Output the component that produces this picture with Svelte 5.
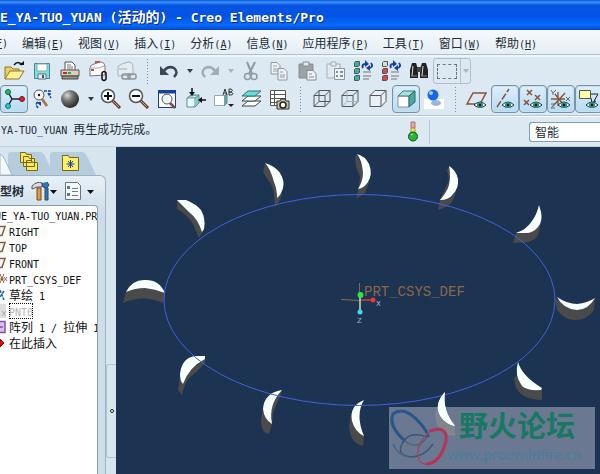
<script>
  const menus = [
    ['编辑', 'E'], ['视图', 'V'], ['插入', 'I'], ['分析', 'A'], ['信息', 'N'],
    ['应用程序', 'P'], ['工具', 'T'], ['窗口', 'W'], ['帮助', 'H']
  ];

  const fileTools = [
    { id: 'open', label: '打开' }, { id: 'save', label: '保存' }, { id: 'print', label: '打印' },
    { id: 'mail', label: '发送附件' }, { id: 'link', label: '发送链接' }, { id: 'sep' },
    { id: 'undo', label: '撤消' }, { id: 'drop', label: '撤消列表' },
    { id: 'redo', label: '重做' }, { id: 'dropoff', label: '重做列表' },
    { id: 'cut', label: '剪切' }, { id: 'copy', label: '复制' }, { id: 'paste', label: '粘贴' },
    { id: 'special', label: '选择性粘贴' }, { id: 'regen', label: '再生' },
    { id: 'regenall', label: '再生管理器' }, { id: 'find', label: '查找' }
  ];

  const viewTools = [
    { id: 'spin', label: '旋转中心', on: true }, { id: 'orient', label: '定向模式' },
    { id: 'sphere', label: '外观库' }, { id: 'drop', label: '外观列表' },
    { id: 'zoomin', label: '放大' }, { id: 'zoomout', label: '缩小' }, { id: 'refit', label: '重新调整' },
    { id: 'reorient', label: '重定向' }, { id: 'views', label: '已保存视图' }, { id: 'layers', label: '层' },
    { id: 'manager', label: '视图管理器' }, { id: 'sep' },
    { id: 'wire', label: '线框' }, { id: 'hidden', label: '隐藏线' }, { id: 'nohidden', label: '消隐' },
    { id: 'shaded', label: '着色', on: true }, { id: 'realism', label: '增强的真实感' }, { id: 'sep' },
    { id: 'plane', label: '平面显示' }, { id: 'axis', label: '轴显示', on: true },
    { id: 'points', label: '点显示', on: true }, { id: 'csys', label: '坐标系显示', on: true },
    { id: 'notes', label: '注释显示', on: true }
  ];

  const tree = [
    { text: 'UE_YA-TUO_YUAN.PRT', icon: '' }, { text: 'RIGHT', icon: 'plane' },
    { text: 'TOP', icon: 'plane' }, { text: 'FRONT', icon: 'plane' },
    { text: 'PRT_CSYS_DEF', icon: 'csys' }, { text: '草绘 1', icon: 'sketch' },
    { text: 'PNT0', icon: 'point', off: true }, { text: '阵列 1 / 拉伸 1', icon: 'pattern' },
    { text: '在此插入', icon: 'insert' }
  ];

  // Each blade: the shaded side first, then the lit face.
  const blades = [
    ['M265 164L263 172L268 180Q274 187 274 195L275 207L280 200L282 194L276 180Z', 'M265 163Q275 166 280 173Q285 181 283 188Q281 195 277 198Q277 189 274 182Q271 170 265 163Z'],
    ['M357 155L355 157L356 167L360 177L359 187L356 199L365 193L369 183L364 170Z', 'M357 154Q365 156 369 164Q373 174 368 182Q364 188 358 189Q363 181 363 173Q362 160 357 154Z'],
    ['M449 167L447 170L449 180L440 200L438 210L448 206Q455 200 456 190Z', 'M449 166Q456 170 458 179Q459 188 453 194Q449 200 440 200Q447 192 449 185Q451 176 449 166Z'],
    ['M516 233L513 243L528 242Q537 240 539 232L541 222Z', 'M539 205L541 212Q543 221 538 227Q533 233 526 233L516 233Q526 230 532 221Q537 214 539 205Z'],
    ['M555 299L557 310Q565 320 575 320Q587 320 594 310L595 298L577 305Z', 'M557 297Q567 304 577 304Q588 303 595 298Q588 310 577 310Q563 309 557 297Z'],
    ['M516 376L514 378L516 388Q523 400 542 400L542 388Z', 'M518 362Q522 376 542 388L541 390Q527 391 522 386Q514 375 518 362Z'],
    ['M437 408L435 414Q437 436 455 436L455 426Z', 'M445 392Q442 410 455 426Q446 424 441 417Q433 405 445 392Z'],
    ['M351 413L349 427Q351 444 363 446L364 436Z', 'M364 400Q355 415 364 436Q355 432 352 421Q349 406 364 400Z'],
    ['M282 390L281 394L273 413L272 424L269 434Q261 433 261 420L263 408Z', 'M282 390Q268 405 272 424Q264 419 263 409Q264 393 282 390Z'],
    ['M205 356L205 363Q197 372 189 378Q184 385 182 395L178 390L180 376Z', 'M205 356L205 359Q189 367 183 384Q180 381 180 374Q182 357 196 356Z'],
    ['M126 292L123 303Q142 294 163 303L165 293L145 283Z', 'M126 292Q132 280 144 280Q159 279 165 293Q155 289 145 288Q135 288 126 292Z'],
    ['M177 200L177 209Q187 214 193 224L199 238L204 230L198 216Z', 'M177 200L186 200Q196 204 201 210Q206 219 204 229L202 232Q198 219 189 212Z']
  ];

  // Splits mixed text so that CJK and Latin runs can have their own size.
  const runs = (s) => s.match(/[\u2e80-\uffff]+|[^\u2e80-\uffff]+/g) ?? [];
</script>

{#snippet mixed(s)}{#each runs(s) as r}<span class={r.charCodeAt(0) > 11000 ? 'cjk' : 'latin'}>{r}</span>{/each}{/snippet}

{#snippet eye()}
  <path d="M10 19q6-6 12 0q-6 5-12 0z" fill="#fff" stroke="#234" />
  <circle cx="16" cy="19" r="3" fill="#27907c" /><circle cx="16" cy="19" r="1.2" fill="#012" />
{/snippet}

{#snippet cube(a, b)}
  <path d="M5 9.5h11v11H5zM5 9.5l5-5h11v11l-5 5M16 9.5l5-5" fill={a} stroke="#555" />
  {#if b}<path d="M10 4.5v11h11M10 15.5l-5 5" fill="none" stroke={b} />{/if}
{/snippet}

{#snippet lens(sign)}
  <path d="M14 14l8 8" stroke="#5a3828" stroke-width="3" /><path d="M15 15l6 6" stroke="#d6a87a" />
  <circle cx="10" cy="10" r="6.5" fill="#f8fcff" stroke="#555" stroke-width="1.5" />
  {#if sign}<path d={sign} stroke="#111" stroke-width="2" fill="none" />{/if}
{/snippet}

{#snippet icon(id)}
  <svg viewBox="0 0 26 26" width="26" height="26" fill="none" aria-hidden="true">
    {#if id === 'open'}
      <path d="M4 21V9h6l2 2h6v3" fill="#e9ce62" stroke="#8a7722" /><path d="M4 21l5-8h14l-5 8z" fill="#fff09a" stroke="#8a7722" />
      <path d="M13 7q4-5 8 0" stroke="#111" stroke-width="1.5" /><path d="M18 7h5V3z" fill="#111" />
    {:else if id === 'save'}
      <path d="M5.500 5.500h15v15h-15z" fill="#7fdede" stroke="#4a8590" /><path d="M8 6h10v7H8z" fill="#fff" stroke="#8aa" /><path d="M9 16h8v5H9z" fill="#eef" stroke="#578" /><path d="M14 17v3" stroke="#456" stroke-width="2" />
    {:else if id === 'print'}
      <path d="M8 13V4h7l3 3v6z" fill="#fff" stroke="#555" /><path d="M10 7h4M10 9h6M10 11h6" stroke="#777" />
      <path d="M4 12h18v6H4z" fill="#d8d2b8" stroke="#555" /><path d="M5 18h16v3H5z" fill="#9a9684" stroke="#444" /><path d="M6 15h4" stroke="#c22" stroke-width="2" /><path d="M11 15h3" stroke="#2a4" stroke-width="2" />
    {:else if id === 'mail'}
      <path d="M5 18v-8q0-3 4-4l6-2q5 0 5 5v8z" fill="#fafafa" stroke="#777" /><path d="M5 10h9l5-2" stroke="#aaa" /><path d="M6 12h3M10 4h5" stroke="#b55" stroke-width="2" /><path d="M17 21v-6q2-3 4 0v6q-2 3-4 0v-4" stroke="#111" stroke-width="1.500" />
    {:else if id === 'link'}
      <path d="M5 18v-8q0-3 4-4l6-2q5 0 5 5v8z" fill="#e5ecf0" stroke="#aab2b8" /><path d="M6 11h8" stroke="#aab" /><rect x="9" y="16" width="8" height="5" rx="2" stroke="#8a9298" stroke-width="1.500" /><rect x="15" y="16" width="8" height="5" rx="2" stroke="#8a9298" stroke-width="1.500" />
    {:else if id === 'undo'}
      <path d="M7 14q5-7 11-4q5 4 0 9" stroke="#3c4654" stroke-width="2.500" /><path d="M4 8v9h9z" fill="#3c4654" />
    {:else if id === 'redo'}
      <path d="M19 14q-5-7-11-4q-5 4 0 9" stroke="#a3adb5" stroke-width="2.500" /><path d="M22 8v9h-9z" fill="#a3adb5" />
    {:else if id === 'cut'}
      <path d="M9 4l5 12M17 4l-6 12" stroke="#909aa2" stroke-width="2" /><circle cx="9.500" cy="18.500" r="3" stroke="#909aa2" stroke-width="1.500" /><circle cx="16" cy="18.500" r="3" stroke="#909aa2" stroke-width="1.500" />
    {:else if id === 'copy'}
      <path d="M5 4.500h6l3 3V16H5z" fill="#eef2f5" stroke="#8e979e" /><path d="M7 8h4M7 11h5M7 13h5" stroke="#9ba3aa" /><path d="M12 10.500h6l3 3V22h-9z" fill="#eef2f5" stroke="#8e979e" /><path d="M14 14h3M14 17h5M14 19h5" stroke="#8e979e" />
    {:else if id === 'paste'}
      <path d="M5 6h14v14H5z" fill="#9ca2a6" stroke="#858c92" /><path d="M9 4h6v4H9z" fill="#e4e8ea" stroke="#858c92" /><path d="M13 12.500h6l3 3V22h-9z" fill="#eef2f5" stroke="#858c92" /><path d="M15 16h3M15 19h5" stroke="#858c92" />
    {:else if id === 'special'}
      <path d="M5 6h13v14H5z" fill="#e4eaee" stroke="#a5adb3" /><path d="M9 4h5v4H9z" fill="#e4e8ea" stroke="#a5adb3" /><path d="M12.500 10.500h10v11h-10z" fill="#eef2f5" stroke="#8e979e" /><path d="M14 14h2M18 14h3M14 18h2M18 18h3" stroke="#858c92" stroke-width="2" />
    {:else if id === 'regen' || id === 'regenall'}
      {#each [3, 10, 17] as y, i}
        <path d="M4.500 {y + 1.5}l1-1h4v4l-1 1h-4z" fill={id === 'regen' ? '#35b4a4' : i ? '#dc4450' : '#d8dde0'} stroke="#555" />
      {/each}
      <path d="M13 10q-2-4 3-4" stroke="#1740a8" stroke-width="2" /><path d="M15 2v7l4-3z" fill="#1740a8" /><path d="M21 5q3 4-2 5" stroke="#1740a8" stroke-width="2" /><path d="M20 7v6l-4-3z" fill="#1740a8" />
      <path d="M13 14h8M13 18h8M13 21h6" stroke="#777" />
    {:else if id === 'find'}
      <path d="M6 5h4l2 6v9H4v-8zM16 5h4l2 7v8h-8v-9z" fill="#222" /><path d="M11 9h4v5h-4z" fill="#444" /><path d="M7 8l-1 10M17 8l-1 10" stroke="#ddd" /><path d="M5 18h6M15 18h6" stroke="#888" />
    {:else if id === 'spin'}
      <path d="M7 6l4 7l10 0M11 13l-4 7" stroke="#223" stroke-width="1.500" /><circle cx="7" cy="6" r="2.500" fill="#2abf3b" stroke="#165" /><circle cx="21" cy="13" r="2.500" fill="#d8202c" stroke="#811" /><circle cx="7" cy="20" r="2.500" fill="#27c8cf" stroke="#177" />
    {:else if id === 'orient'}
      <path d="M13 13l5 7" stroke="#b0784a" stroke-width="3" /><circle cx="10" cy="9" r="5" fill="#f4f8fa" stroke="#555" /><circle cx="10" cy="9" r="1.200" fill="#111" /><path d="M15 5h6v4M19 7l3 5M9 22q-4-5 1-6" stroke="#1740a8" stroke-width="1.500" stroke-dasharray="3 1" /><path d="M7 16h5v4z" fill="#1740a8" />
    {:else if id === 'sphere'}
      <circle cx="13" cy="13" r="9" fill="url(#ball)" />
    {:else if id === 'zoomin'}{@render lens('M10 6v8M6 10h8')}
    {:else if id === 'zoomout'}{@render lens('M6 10h8')}
    {:else if id === 'refit'}
      <rect x="4.500" y="4.500" width="17" height="17" fill="#fff" stroke="#173f94" /><path d="M4 6h18" stroke="#173f94" stroke-width="3" /><path d="M16 17l5 5" stroke="#805038" stroke-width="2.500" /><circle cx="13" cy="13" r="5" fill="#eef7fa" stroke="#555" />
    {:else if id === 'reorient'}
      <path d="M5 12h8v9H5z" fill="#eefcfc" stroke="#5b8c90" /><path d="M13 12l4-3v8l-4 4M5 12l4-3h8" fill="#7fcfc9" stroke="#5b8c90" /><path d="M10 2v6M24 14h-5" stroke="#111" stroke-width="1.500" /><path d="M7 6h6l-3 4zM20 11v6l-4-3z" fill="#111" />
    {:else if id === 'views'}
      <path d="M4.500 9.500h10v10h-10z" fill="#fff" stroke="#9aa" /><path d="M14 10l3-2v9l-3 3" fill="#62aaa5" stroke="#688" /><path d="M13 9l2-6l2 6M14 7h3M19 9V3h2q3 1 0 3h-2h2q4 2 0 3z" stroke="#333" /><path d="M18 18h6l-3 3z" fill="#222" />
    {:else if id === 'layers'}
      <path d="M4 20l6-5h13l-6 5z" fill="#fff" stroke="#444" /><path d="M4 15l6-5h13l-6 5z" fill="#f4ffff" stroke="#444" /><path d="M4 10l6-5h13l-6 5z" fill="#62dede" stroke="#386e70" />
    {:else if id === 'manager'}
      <path d="M4.500 4.500h15v15h-15zM4 8.500h16M4 12.500h16M4 16.500h16M8.500 4v16" fill="#fff" stroke="#555" /><path d="M11 15h3l1-2h4l1 2h3v8H11z" fill="#c9c2a4" stroke="#333" /><circle cx="17" cy="19" r="3" fill="#fff" stroke="#222" stroke-width="1.500" />
    {:else if id === 'wire'}{@render cube('none', '#555')}
    {:else if id === 'hidden'}{@render cube('none', '#a6b0b8')}
    {:else if id === 'nohidden'}{@render cube('#e9f1f6', '')}
    {:else if id === 'shaded'}
      <path d="M5 10h11v11H5z" fill="#fff" stroke="#899" /><path d="M5 10l5-5h12l-6 5z" fill="#a4e4df" stroke="#477" /><path d="M16 10l6-5v11l-6 5z" fill="#4ba9a4" stroke="#366" />
    {:else if id === 'realism'}
      <path d="M3 13h20v10H3z" fill="#fff" /><ellipse cx="15" cy="17" rx="5" ry="3" fill="#9bb8dc" /><circle cx="12" cy="9" r="5.500" fill="#1767e8" /><circle cx="10" cy="7" r="2" fill="#9ccbff" />
    {:else if id === 'plane'}
      <path d="M3 18L9 7h13l-6 11z" stroke="#8a5137" stroke-width="1.500" />{@render eye()}
    {:else if id === 'axis'}
      <path d="M5 21L17 3" stroke="#8a5137" stroke-width="1.500" stroke-dasharray="7 2" />{@render eye()}
    {:else if id === 'points'}
      <path d="M7 4l5 5M12 4L7 9M15 9l5 5M20 9l-5 5M4 14l5 5M9 14l-5 5" stroke="#8a5137" stroke-width="1.500" />{@render eye()}
    {:else if id === 'csys'}
      <path d="M10 6v14M5 20L17 7M3 13h14M7 8l8 10" stroke="#8a5137" stroke-width="1.300" /><path d="M3 4l2 3l3-3M5 7v2M18 11l4 4M22 11l-4 4M3 18h4l-4 4h4" stroke="#667" />{@render eye()}
    {:else if id === 'notes'}
      <path d="M3.500 4.500h11v8h-11z" fill="#ffffa8" stroke="#555" /><path d="M15 8h7l-5 9M15 12l1 5l4-2" stroke="#222" />{@render eye()}
    {/if}
  </svg>
{/snippet}

{#snippet tool(t)}
  {#if t.id === 'sep'}
    <span class="grip"></span>
  {:else if t.id === 'drop' || t.id === 'dropoff'}
    <button class="drop" class:off={t.id === 'dropoff'} aria-label={t.label}><i></i></button>
  {:else}
    <button class="tool" class:on={t.on} aria-label={t.label}>{@render icon(t.id)}</button>
  {/if}
{/snippet}

<svg class="defs" width="0" height="0" aria-hidden="true">
  <radialGradient id="ball" cx=".35" cy=".3" r=".75">
    <stop offset="0" stop-color="#d8d8d8" /><stop offset=".4" stop-color="#777" /><stop offset="1" stop-color="#222" />
  </radialGradient>
</svg>

<div class="app">
  <header class="title">{@render mixed('E_YA-TUO_YUAN (')}<span class="cjk">活动的</span><span class="latin">) - Creo Elements/Pro</span></header>

  <nav class="menu">
    <button class="first"><span class="latin">(<u>F</u>)</span></button>
    {#each menus as [name, key]}
      <button><span class="cjk">{name}</span><span class="latin">(<u>{key}</u>)</span></button>
    {/each}
  </nav>

  <div class="tools">
    <div class="row">
      {#each fileTools as t}{@render tool(t)}{/each}
      <button class="pick" aria-label="选取框"><span class="marquee"></span><span class="caret"><i></i></span></button>
    </div>
    <div class="row">
      {#each viewTools as t}{@render tool(t)}{/each}
    </div>
  </div>

  <div class="status">
    <p>{@render mixed('YA-TUO_YUAN 再生成功完成。')}</p>
    <div class="lamp">
      <svg viewBox="0 0 12 22" width="12" height="22" aria-hidden="true">
        <path d="M4 1h4v6H4z" fill="#e9a0a0" stroke="#a77" /><path d="M4 7h4v5H4z" fill="#f4e55a" stroke="#a95" /><circle cx="6" cy="15.500" r="4.500" fill="#27b637" stroke="#124d18" /><path d="M4 14l2-1" stroke="#b8ffb8" />
      </svg>
    </div>
    <select aria-label="过滤器"><option>智能</option></select>
  </div>

  <main>
    <aside>
      <div class="tabs">
        <svg viewBox="0 0 106 26" width="106" height="26" aria-hidden="true">
          <path d="M8 26V6q0-3 4-3h28q3 0 5 4l9 19z" fill="#b5cddd" /><path d="M50 26V6q0-3 4-3h28q3 0 5 4l9 19z" fill="#b5cddd" />
          <path d="M0 5q3 1 5 6l7 15H0z" fill="#f3f8fb" stroke="#a3b8c6" />
          <path d="M20.500 5.500v-2h5l1 2h5v8h-11zM23.500 9.500v-2h5l1 2h5v8h-11zM26.500 13.500v-2h5l1 2h5v8h-11z" fill="#ffe95a" stroke="#75681d" />
          <path d="M62.500 8.500v-2h6l1 2h9v13h-16z" fill="#ffee68" stroke="#75681d" /><path d="M70.500 11v8M66.500 15h8M68 12l5 6M73 12l-5 6" stroke="#1740a8" />
        </svg>
      </div>
      <div class="panel">
        <div class="head">
          <h2>型树</h2>
          <button aria-label="设置">
            <svg viewBox="0 0 28 22" width="28" height="22" aria-hidden="true">
              <path d="M2 6q5-5 10-3v4H7l-5 2z" fill="#ddd" stroke="#555" /><path d="M7 8h4v12H7z" fill="#e09a40" stroke="#7b4820" /><path d="M12 3l1 4l4 1l2-3l-2-3M15 8v12h3V8" fill="#2878d0" stroke="#345" /><path d="M20 10h7l-3.500 4z" fill="#111" />
            </svg>
          </button>
          <button aria-label="显示">
            <svg viewBox="0 0 30 22" width="30" height="22" aria-hidden="true">
              <path d="M1.500 2.500h12l3 3v14h-15z" fill="#f4f9fc" stroke="#64748a" /><path d="M3 6h3v3H3zM3 13h3v3H3z" fill="#65758a" /><path d="M8 8.500h6M8 11.500h6M8 15.500h6" stroke="#778" /><path d="M23 10h7l-3.500 4z" fill="#111" />
            </svg>
          </button>
        </div>
        <ul>
          {#each tree as n}
            <li>
              <svg viewBox="0 0 8 16" width="8" height="16" aria-hidden="true" fill="none">
                {#if n.icon === 'plane'}<path d="M0 3.500h5l-3 9H0" stroke="#8a5a3c" stroke-width="1.500" />
                {:else if n.icon === 'csys'}<path d="M0 3l4 9M0 8h4M4 3l-4 9" stroke="#9a5a34" /><path d="M4 6l3 4M7 6l-3 4" stroke="#778" />
                {:else if n.icon === 'sketch'}<path d="M0 3l4 10M4 4L0 10" stroke="#1866b8" stroke-width="1.500" stroke-dasharray="3 1" />
                {:else if n.icon === 'point'}<path d="M0 1h6v14H0z" fill="#dedede" /><path d="M2 8l4 5M6 8l-4 5" stroke="#aaa" />
                {:else if n.icon === 'pattern'}<path d="M0 2.500h5v11H0M0 8h3" fill="#d9c0ec" stroke="#8450a5" stroke-width="1.500" />
                {:else if n.icon === 'insert'}<path d="M0 4l4 4l-4 4z" fill="#e00d17" stroke="#900" />{/if}
              </svg>
              <span class="name" class:off={n.off} class:root={!n.icon}>{@render mixed(n.text)}</span>
            </li>
          {/each}
        </ul>
      </div>
      <div class="sash"><span></span></div>
    </aside>

    <svg class="view" viewBox="116 147 484 327" preserveAspectRatio="xMidYMid slice" role="img" aria-label="模型视图">
      <rect x="116" y="147" width="484" height="327" fill="#1c3352" />
      {#each blades as [side, face]}<path d={side} fill="#4a4a4a" /><path d={face} fill="#f8ffff" />{/each}
      <ellipse cx="359.500" cy="300" rx="195.500" ry="105.500" fill="none" stroke="#4361dc" />
      <path d="M341 299.500l19 1M359.500 283v12" stroke="#8c6848" />
      <path d="M360 300h13" stroke="#d83a3a" stroke-width="1.500" /><path d="M360 295v17" stroke="#b8e8c0" stroke-width="1.500" />
      <circle cx="360.500" cy="295" r="3" fill="#2fe63e" /><circle cx="373" cy="300" r="2.500" fill="#e23a3a" /><circle cx="360" cy="312" r="2.500" fill="#3ce0ea" />
      <text x="364" y="296" class="csys">PRT_CSYS_DEF</text>
      <text x="376" y="306" class="mark">X</text><text x="357" y="323" class="mark">Z</text>
      <rect x="389" y="407" width="206" height="62" fill="#b8bfd0" fill-opacity=".5" />
      <path d={blades[6][1]} fill="#f8ffff" />
      <g fill="none">
        <path d="M405 441Q388 426 393 414Q404 405 420 423Q428 432 428 437" stroke="#28558a" stroke-width="3" />
        <path d="M428 437Q408 430 402 444Q396 456 412 457Q425 456 433 444" stroke="#3c5578" stroke-width="1.500" />
        <path d="M405 441Q418 451 427 437M393 444Q397 455 409 457" stroke="#4c6480" stroke-width="1.500" />
        <path d="M430 431Q414 446 419 460Q421 464 426 464" stroke="#9d4966" stroke-width="1.500" />
        <path d="M430 431Q448 425 446 441Q440 464 426 464" stroke="#b63358" stroke-width="3" />
      </g>
      <text x="459" y="437" class="brand">野火论坛</text>
      <text x="447" y="460" class="site">www.proewildfire.cn</text>
    </svg>
  </main>
</div>

<style>
  :global(body) { margin: 0; }
  .app { height: 100vh; display: flex; flex-direction: column; overflow: hidden; background: #dce9f2; color: #222b36; font: 12px/16px "Noto Sans CJK SC", sans-serif; }
  .defs { position: absolute; }
  button { border: 0; padding: 0; background: none; color: inherit; font: inherit; flex: none; }
  svg { display: block; flex: none; }
  .cjk { font-family: "Noto Sans CJK SC", sans-serif; }
  .latin { font-family: "DejaVu Sans Mono", monospace; font-size: 10px; white-space: pre; }
  .title { height: 30px; box-sizing: border-box; padding-top: 4px; background: linear-gradient(#0a50d8 0, #3a94ff 2px, #0a55e2 5px, #0353e4 16px, #066aff 25px, #0349c8 30px); color: #fff; font-size: 14px; line-height: 24px; font-weight: bold; white-space: nowrap; text-shadow: 1px 1px #0a2a80; }
  .title .latin { font-size: 13px; }
  .menu { display: flex; gap: 14px; height: 25px; align-items: center; padding-top: 4px; box-sizing: border-box; background: linear-gradient(#f5f9fc, #e4eef5); border-bottom: 1px solid #adc0cd; white-space: nowrap; }
  .menu .first { width: 8px; display: flex; justify-content: flex-end; }
  .tools { border-top: 2px solid #eef5f9; border-bottom: 1px solid #b2c6d4; padding-bottom: 2px; }
  .row { display: flex; height: 28px; align-items: center; }
  .tool { width: 28px; height: 28px; display: grid; place-items: center; box-sizing: border-box; border: 1px solid transparent; border-radius: 4px; }
  .tool.on { border-color: #7793a8; background: linear-gradient(#dceefa, #b5dbf2); background-clip: padding-box; box-shadow: inset 0 0 0 1px #c9dfec; }
  .grip { width: 3px; height: 26px; margin: 0 6px; flex: none; background: radial-gradient(circle, #7890a8 1px, transparent 1px) 0 0 / 3px 3px; }
  .drop { width: 13px; height: 28px; display: grid; place-items: center; }
  i { display: block; border: 3px solid transparent; border-top: 4px solid #333c46; border-bottom: 0; }
  .off i, .caret i { border-top-color: #abb6be; }
  .pick { display: flex; height: 26px; width: 38px; box-sizing: border-box; border: 1px solid #b0bfca; border-radius: 3px; align-items: center; }
  .marquee { width: 18px; height: 13px; margin: 0 3px; border: 1px dashed #69747d; flex: none; }
  .caret { flex: 1; align-self: stretch; display: grid; place-items: center; border-left: 1px solid #b0bfca; }
  .status { display: flex; align-items: center; height: 31px; box-sizing: border-box; border-top: 1px solid #f7fbfd; border-bottom: 1px solid #c0d1dc; padding-left: 1px; }
  .status p { margin: 0; width: 396px; flex: none; padding-bottom: 4px; white-space: nowrap; }
  .lamp { width: 32px; height: 24px; display: grid; place-items: center; border-right: 1px solid #b6c7d2; }
  select { appearance: none; margin-left: auto; width: 71px; height: 20px; padding: 0 5px; border: 1px solid #7ba0b8; border-right: 0; border-radius: 3px 0 0 3px; background: #fff; color: #222b36; font: 12px/16px "Noto Sans CJK SC", sans-serif; }
  main { flex: 1; display: flex; min-height: 0; }
  aside { width: 116px; flex: none; display: grid; grid-template: 28px 1fr / 106px 10px; background: #d7e5ef; }
  .tabs { padding-top: 2px; grid-column: 1 / 3; }
  .panel { display: flex; flex-direction: column; min-height: 0; border: 1px solid #a0b2bf; border-left: 0; border-bottom: 0; border-radius: 0 6px 0 0; padding-right: 7px; background: linear-gradient(#e9f1f7, #ccdce8 40px); }
  .head { display: flex; align-items: center; height: 29px; gap: 6px; }
  h2 { margin: 0; font-size: 12px; line-height: 16px; width: 24px; white-space: nowrap; flex: none; }
  ul { flex: 1; min-height: 0; list-style: none; margin: 0; padding: 1px 0 0; overflow: hidden; background: #fff; border: 1px solid #82a3b6; border-left: 0; border-bottom: 0; border-radius: 0 4px 0 0; color: #111; }
  li { display: flex; height: 16px; gap: 1px; white-space: nowrap; }
  .name { box-sizing: border-box; height: 16px; line-height: 16px; }
  .name.root { margin-left: -14px; }
  .name.off { color: #b5b5b5; outline: 1px dotted #111; outline-offset: -1px; }
  .sash { align-self: center; height: 92px; border: 1px solid #b0c4d0; border-right: 0; border-radius: 3px 0 0 3px; display: grid; place-items: center; margin-top: 172px; }
  .sash span { width: 2px; height: 2px; border: 1px solid #222; border-radius: 50%; background: #fff; }
  .view { flex: 1; min-width: 0; height: 100%; }
  .csys { font: 14px "Liberation Mono", monospace; fill: #8c6848; }
  .mark { font: 8px "Liberation Mono", monospace; fill: #a9b2bc; }
  .brand { font: bold 29px "Noto Sans CJK SC", sans-serif; fill: #187863; }
  .site { font: 14px "Noto Sans", "Open Sans", sans-serif; fill: #4c7c9c; }
</style>
